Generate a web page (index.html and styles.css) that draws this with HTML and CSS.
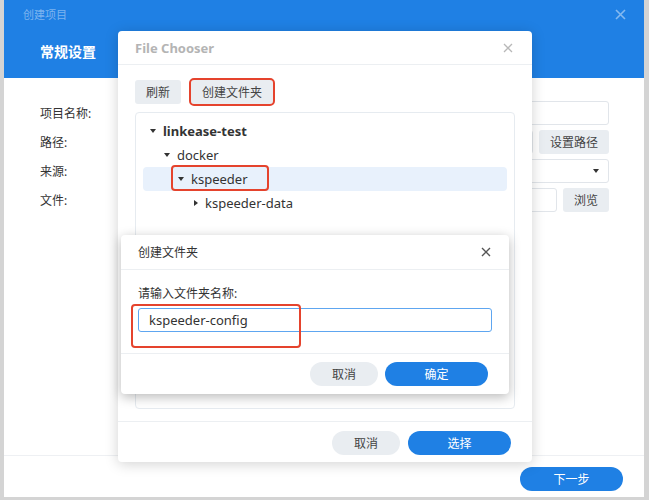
FILE: index.html
```html
<!DOCTYPE html>
<html lang="zh-CN">
<head>
  <meta charset="UTF-8">
  <title>创建项目</title>
  <link rel="stylesheet" href="styles.css">
</head>
<body>
  <!-- Base window -->
  <div class="window">
    <div class="win-head">
      <div class="win-bar">
        <span class="win-title">创建项目</span>
        <svg class="win-close" width="11" height="11" viewBox="0 0 11 11"><path d="M1 1L10 10M10 1L1 10" stroke="currentColor" stroke-width="1.6"/></svg>
      </div>
      <h1>常规设置</h1>
    </div>

    <div class="form">
      <label>项目名称:</label>
      <div class="field"><div class="input"></div></div>
      <label>路径:</label>
      <div class="field"><div class="input"></div><button class="btn">设置路径</button></div>
      <label>来源:</label>
      <div class="field"><div class="input select"><span class="caret"></span></div></div>
      <label>文件:</label>
      <div class="field"><div class="input"></div><button class="btn">浏览</button></div>
    </div>

    <div class="win-foot">
      <button class="btn primary wide">下一步</button>
    </div>
  </div>

  <!-- File chooser dialog -->
  <div class="dialog chooser">
    <div class="dlg-head">
      <span class="dlg-title faded">File Chooser</span>
      <svg class="dlg-close light" width="10" height="10" viewBox="0 0 10 10"><path d="M1 1L9 9M9 1L1 9" stroke="currentColor" stroke-width="1.3"/></svg>
    </div>
    <div class="dlg-body">
      <div class="toolbar">
        <button class="btn">刷新</button>
        <button class="btn marked">创建文件夹</button>
      </div>
      <div class="tree">
        <div class="node bold lv0"><span class="tri down"></span>linkease-test</div>
        <div class="node lv1"><span class="tri down"></span>docker</div>
        <div class="node lv2 active"><span class="mark"><span class="tri down"></span>kspeeder</span></div>
        <div class="node lv3"><span class="tri right"></span>kspeeder-data</div>
      </div>
    </div>
    <div class="dlg-foot">
      <button class="btn pill">取消</button>
      <button class="btn primary pill wide">选择</button>
    </div>
  </div>

  <!-- Create folder dialog -->
  <div class="dialog mkdir">
    <div class="dlg-head tall">
      <span class="dlg-title">创建文件夹</span>
      <svg class="dlg-close" width="10" height="10" viewBox="0 0 10 10"><path d="M1 1L9 9M9 1L1 9" stroke="currentColor" stroke-width="1.4"/></svg>
    </div>
    <div class="dlg-body">
      <div class="prompt">请输入文件夹名称:</div>
      <div class="name-wrap"><div class="name-input">kspeeder-config</div></div>
    </div>
    <div class="dlg-foot">
      <button class="btn pill">取消</button>
      <button class="btn primary pill wide">确定</button>
    </div>
  </div>
</body>
</html>
```

FILE: styles.css
```css
/* Reset */
* {
  margin: 0;
  padding: 0;
  box-sizing: border-box;
  font-family: "Noto Sans", "Noto Sans CJK SC", sans-serif;
}

body {
  background: #d4d4d4;
  width: 649px;
  height: 500px;
  overflow: hidden;
  position: relative;
  color: #333;
}

button {
  border: none;
  cursor: pointer;
}

/* Base window */
.window {
  margin: 0 5px 0 4px;
  height: 497px;
  background: #fff;
  display: flex;
  flex-direction: column;
}

.win-head {
  background: #1f80e4;
  height: 78px;
  padding: 0 18px 0 19px;
}

.win-bar {
  height: 28px;
  display: flex;
  justify-content: space-between;
  align-items: center;
}

.win-title {
  font-size: 11px;
  color: rgba(255, 255, 255, 0.42);
}

.win-close {
  color: rgba(255, 255, 255, 0.45);
}

.win-head h1 {
  margin: 14px 0 0 17px;
  font-size: 14px;
  line-height: 20px;
  color: #fff;
}

.form {
  flex: 1;
  padding: 23px 35px 0 36px;
  display: grid;
  grid-template-columns: 90px 1fr;
  grid-auto-rows: 24px;
  row-gap: 5px;
  align-items: center;
}

.form label {
  font-size: 12px;
}

.field {
  display: flex;
  gap: 6px;
  height: 24px;
}

.input {
  flex: 1;
  border: 1px solid #e1e5ea;
  border-radius: 3px;
}

.select {
  display: flex;
  justify-content: flex-end;
  align-items: center;
  padding-right: 9px;
}

.caret {
  border-left: 3px solid transparent;
  border-right: 3px solid transparent;
  border-top: 4px solid #333;
}

.btn {
  background: #e9edf1;
  color: #444;
  font-size: 12px;
  height: 24px;
  padding: 0 11px;
  border-radius: 3px;
}

.btn.primary {
  background: #1f80e4;
  color: #fff;
}

.btn.pill {
  border-radius: 12px;
  width: 68px;
}

.btn.wide {
  width: 103px;
  border-radius: 12px;
}

.win-foot {
  height: 42px;
  border-top: 1px solid #eef0f3;
  display: flex;
  justify-content: flex-end;
  align-items: flex-start;
  padding: 11px 21px 0 0;
}

/* Dialogs */
.dialog {
  position: absolute;
  background: #fff;
  border-radius: 4px;
  display: flex;
  flex-direction: column;
}

.chooser {
  left: 118px;
  top: 31px;
  width: 414px;
  height: 431px;
  box-shadow: 0 2px 14px rgba(0, 0, 0, 0.18);
}

.mkdir {
  left: 121px;
  top: 235px;
  width: 388px;
  height: 159px;
  box-shadow: 0 3px 12px rgba(0, 0, 0, 0.28);
}

.dlg-head {
  height: 34px;
  border-bottom: 1px solid #eceff2;
  display: flex;
  justify-content: space-between;
  align-items: center;
  padding: 0 19px 0 17px;
}

.dlg-head.tall {
  height: 35px;
  padding-right: 18px;
}

.dlg-title {
  font-size: 12px;
  color: #333;
}

.dlg-title.faded {
  font-size: 13px;
  font-weight: bold;
  color: #b4b4b4;
}

.dlg-close {
  color: #555;
}

.dlg-close.light {
  color: #b8b8b8;
}

.chooser .dlg-body {
  flex: 1;
  padding: 15px 17px 12px;
  display: flex;
  flex-direction: column;
  gap: 8px;
}

.toolbar {
  display: flex;
  gap: 10px;
}

.marked {
  outline: 2px solid #e5432d;
  outline-offset: 0;
  border-radius: 3px;
}

.tree {
  flex: 1;
  border: 1px solid #e6ebf0;
  border-radius: 4px;
  padding: 6px 7px;
}

.node {
  height: 24px;
  display: flex;
  align-items: center;
  font-size: 13px;
  color: #333;
  border-radius: 4px;
}

.node.bold { font-weight: bold; }
.lv0 { padding-left: 7px; }
.lv1 { padding-left: 21px; }
.lv2 { padding-left: 35px; }
.lv3 { padding-left: 49px; }

.node.active {
  background: #e8f1fc;
}

.tri {
  width: 8px;
  height: 8px;
  margin-right: 5px;
  position: relative;
  flex-shrink: 0;
}

.tri.down::before {
  content: "";
  position: absolute;
  left: 0;
  top: 2px;
  border-left: 3.5px solid transparent;
  border-right: 3.5px solid transparent;
  border-top: 4px solid #333;
}

.tri.right::before {
  content: "";
  position: absolute;
  left: 2px;
  top: 0.5px;
  border-top: 3.5px solid transparent;
  border-bottom: 3.5px solid transparent;
  border-left: 4px solid #333;
}

.mark {
  position: relative;
  display: flex;
  align-items: center;
  height: 24px;
}

.mark::after {
  content: "";
  position: absolute;
  left: -7px;
  top: -2px;
  width: 94px;
  bottom: 0;
  border: 2px solid #e5432d;
  border-radius: 4px;
}

.dlg-foot {
  height: 41px;
  border-top: 1px solid #eceff2;
  display: flex;
  justify-content: flex-end;
  gap: 8px;
  padding: 9px 21px 0 0;
}

.mkdir .dlg-foot {
  padding-top: 8px;
  gap: 7px;
}

.mkdir .dlg-body {
  flex: 1;
  padding: 15px 17px 0;
}

.prompt {
  font-size: 12px;
  line-height: 18px;
  margin-bottom: 5px;
}

.name-wrap {
  position: relative;
}

.name-wrap::after {
  content: "";
  position: absolute;
  left: -7px;
  top: -4px;
  width: 166px;
  height: 40px;
  border: 2px solid #e5432d;
  border-radius: 4px;
}

.name-input {
  height: 24px;
  border: 1px solid #5ea6f0;
  border-radius: 3px;
  padding-left: 10px;
  font-size: 13px;
  line-height: 22px;
  color: #333;
}
```
